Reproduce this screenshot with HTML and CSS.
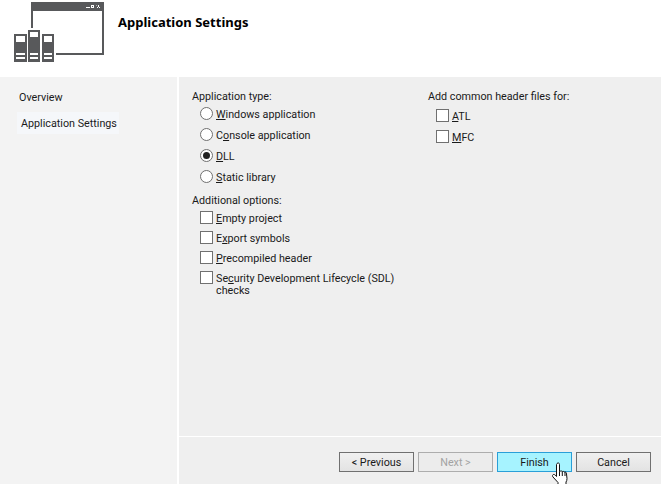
FILE: index.html
```html
<!DOCTYPE html>
<html lang="en">
<head>
<meta charset="utf-8">
<title>Application Settings</title>
<link rel="stylesheet" href="styles.css">
</head>
<body>
<div class="wizard">
  <header class="header">
    <svg class="logo" width="110" height="65" viewBox="0 0 110 65" aria-hidden="true">
      <path class="ink" fill-rule="evenodd" d="M31 2h73v53H56v-2h46V11H33v17h-2z"/>
      <path class="paper" d="M86 7h4v1h-4zM96 5h1v1h1V5h1v1h1v0h-1v1h1v1h-1V7h-1v1h-1V7h1V6h-1z"/>
      <path class="paper" fill-rule="evenodd" d="M91 5h3v3h-3zM92 6v1h1V6z"/>
      <path class="ink" d="M14 34h13v28H14zM28 30h12v32H28zM42 34h12v28H42z"/>
      <path class="paper" d="M16 36h9v6h-9zM16 53h9v2h-9zM16 57h9v2h-9zM30 32h8v5h-8zM30 53h8v2h-8zM30 57h8v2h-8zM44 36h8v6h-8zM44 53h8v2h-8zM44 57h8v2h-8z"/>
    </svg>
    <h1 class="title">Application Settings</h1>
  </header>
  <div class="content">
    <nav class="sidebar">
      <div class="nav-item">Overview</div>
      <div class="nav-item nav-current">Application Settings</div>
    </nav>
    <div class="pane">
      <main class="form">
        <section class="col col-left">
          <div class="group-label">Application type:</div>
          <div class="radios">
            <label class="opt radio-opt"><span class="radio"></span><span class="opt-text"><u>W</u>indows application</span></label>
            <label class="opt radio-opt"><span class="radio"></span><span class="opt-text">C<u>o</u>nsole application</span></label>
            <label class="opt radio-opt"><span class="radio radio-on"></span><span class="opt-text"><u>D</u>LL</span></label>
            <label class="opt radio-opt"><span class="radio"></span><span class="opt-text"><u>S</u>tatic library</span></label>
          </div>
          <div class="group-label group-second">Additional options:</div>
          <div class="checks">
            <label class="opt check-opt"><span class="check"></span><span class="opt-text"><u>E</u>mpty project</span></label>
            <label class="opt check-opt"><span class="check"></span><span class="opt-text">E<u>x</u>port symbols</span></label>
            <label class="opt check-opt"><span class="check"></span><span class="opt-text"><u>P</u>recompiled header</span></label>
            <label class="opt check-opt check-multi"><span class="check"></span><span class="opt-text">Se<u>c</u>urity Development Lifecycle (SDL) checks</span></label>
          </div>
        </section>
        <section class="col col-right">
          <div class="group-label">Add common header files for:</div>
          <div class="checks checks-right">
            <label class="opt check-opt check-tall"><span class="check"></span><span class="opt-text"><u>A</u>TL</span></label>
            <label class="opt check-opt check-tall"><span class="check"></span><span class="opt-text"><u>M</u>FC</span></label>
          </div>
        </section>
      </main>
      <footer class="footer">
        <button class="btn">&lt; Previous</button>
        <button class="btn btn-disabled">Next &gt;</button>
        <button class="btn btn-hover">Finish</button>
        <button class="btn">Cancel</button>
        <svg class="cursor" width="18" height="25" viewBox="0 0 18 25" aria-hidden="true">
          <path class="hand" d="M5 1.500c1-1 2.500-.5 2.500 1V9.500l1-.4c.8-.3 1.500 0 1.800.5.7-.5 1.700-.2 2 .5.800-.4 1.900 0 2.100 1l.6 5.400c.1 1.500-.4 2.500-1 3.500v3H6v-2.500L1 15c-.8-1-.7-1.800 0-2.300.8-.5 1.600-.2 2.300.5L4.500 14.500V2.500z"/>
          <path class="hand-line" d="M7.500 9.500V14M10.300 9.600V14M13 10.100V14"/>
        </svg>
      </footer>
    </div>
  </div>
</div>
</body>
</html>
```
FILE: styles.css
```css
* { box-sizing: border-box; }
html, body { margin: 0; padding: 0; }
body {
  width: 661px;
  height: 484px;
  overflow: hidden;
  background: #fff;
  color: #1a1a1a;
  font-family: Roboto, "Noto Sans", "Liberation Sans", sans-serif;
  font-size: 10.75px;
  line-height: 14px;
}
.wizard { display: flex; flex-direction: column; height: 484px; }
.header { height: 77px; display: flex; align-items: flex-start; background: #fff; }
.logo { display: block; flex: none; width: 110px; }
.ink { fill: #58595b; }
.paper { fill: #fff; }
.title {
  margin: 14px 0 0 8px;
  font-family: "Noto Sans", Roboto, sans-serif;
  font-size: 13px;
  line-height: 17px;
  font-weight: 700;
  color: #000;
}
.content { flex: 1; display: flex; gap: 2px; min-height: 0; }
.sidebar {
  width: 177px;
  flex: none;
  background: #f3f3f3;
  padding: 14px 0 0 17px;
}
.nav-item { padding-left: 2px; height: 14px; line-height: 14px; white-space: nowrap; }
.nav-current {
  width: 102px;
  height: 22px;
  line-height: 24px;
  margin-top: 7px;
  padding-left: 4px;
  background: #f5f7fa;
}
.pane { flex: 1; display: flex; flex-direction: column; gap: 1px; min-width: 0; }
.form {
  flex: 1;
  display: flex;
  background: #efefef;
  padding: 13px 0 0 13px;
}
.col-left { width: 236px; flex: none; }
.col-right { flex: 1; }
.group-label { height: 14px; }
.group-second { margin-top: 9px; }
.radios { margin-top: 3px; display: flex; flex-direction: column; gap: 6px; }
.checks { margin-top: 3px; display: flex; flex-direction: column; gap: 6px; }
.checks-right { margin-top: 5px; }
.opt { display: flex; align-items: flex-start; padding-left: 8px; }
.radio-opt, .check-opt { min-height: 14px; }
.opt-text { padding-top: 1px; }
.check-opt .opt-text { width: 194px; line-height: 12px; padding-top: 2px; }
.check-tall { height: 15px; }
.radio {
  flex: none;
  width: 13px;
  height: 13px;
  margin-right: 3px;
  border: 1px solid #707070;
  border-radius: 50%;
  background: #fff;
  display: flex;
  align-items: center;
  justify-content: center;
}
.radio-on::after {
  content: "";
  width: 7px;
  height: 7px;
  border-radius: 50%;
  background: #222;
}
.check {
  flex: none;
  width: 13px;
  height: 13px;
  margin-right: 3px;
  border: 1px solid #707070;
  background: #fff;
}
.footer {
  position: relative;
  height: 47px;
  flex: none;
  background: #efefef;
  display: flex;
  justify-content: flex-end;
  align-items: flex-start;
  gap: 4px;
  padding: 15px 10px 0 0;
}
.btn {
  width: 75px;
  height: 20px;
  padding: 1px 0 0;
  border: 1px solid #707070;
  background: linear-gradient(#f0f0f0, #e3e3e3);
  color: #1a1a1a;
  font: inherit;
  line-height: 16px;
}
.btn-disabled { border-color: #adadad; background: #ececec; color: #a3a3a3; }
.btn-hover { border-color: #2a9fd8; background: #a6f3ff; }
.cursor { position: absolute; left: 373px; top: 25px; }
.hand { fill: #fff; stroke: #111; stroke-width: 1; }
.hand-line { fill: none; stroke: #111; stroke-width: 1; }
```
